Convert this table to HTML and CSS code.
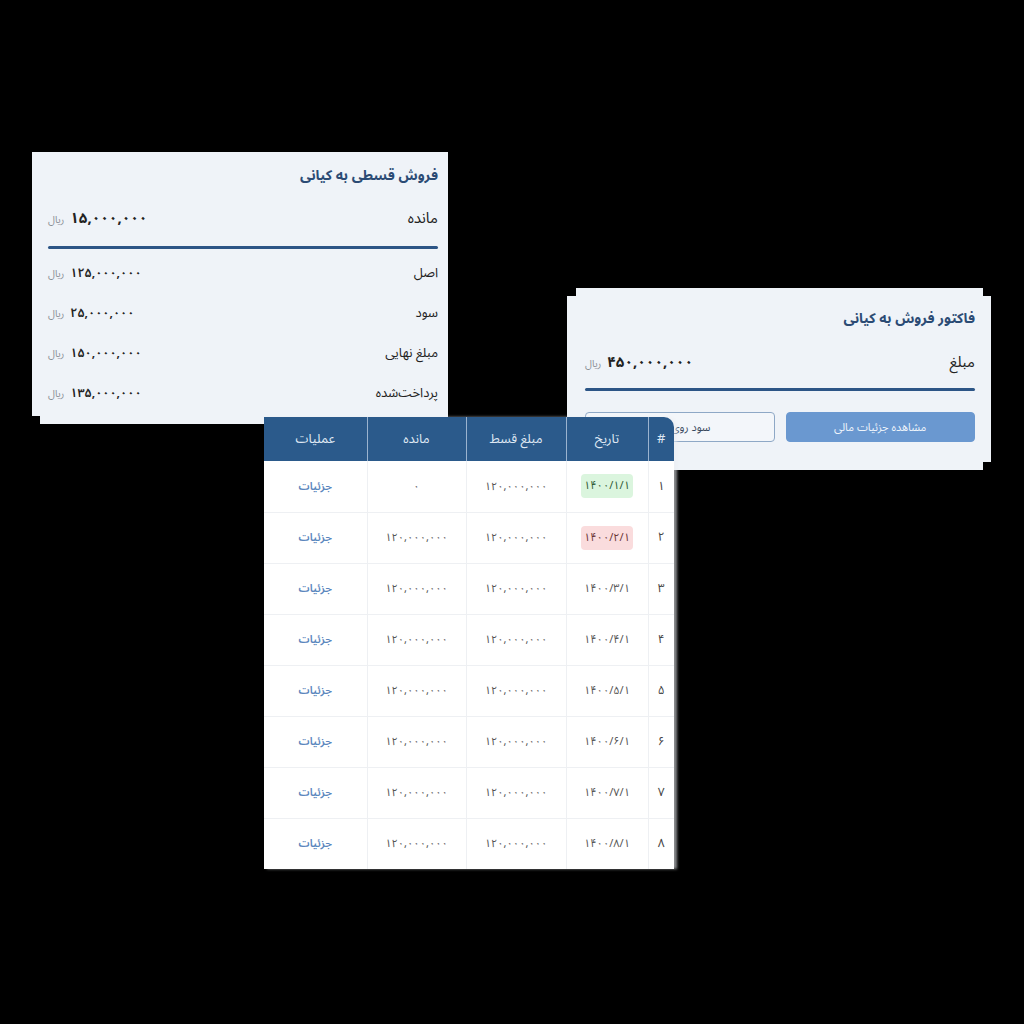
FILE: index.html
```html
<!DOCTYPE html>
<html lang="fa">
<head>
<meta charset="utf-8">
<title>فروش قسطی</title>
<link rel="stylesheet" href="styles.css">
</head>
<body>
<div class="canvas">
  <section class="card card-installment" dir="rtl">
    <h2 class="card-title">فروش قسطی به کیانی</h2>
    <div class="main-row">
      <span class="main-label">مانده</span>
      <span class="amount big"><b>۱۵,۰۰۰,۰۰۰</b><small>ریال</small></span>
    </div>
    <div class="divider"></div>
    <div class="row"><span class="label">اصل</span><span class="amount"><b>۱۲۵,۰۰۰,۰۰۰</b><small>ریال</small></span></div>
    <div class="row"><span class="label">سود</span><span class="amount"><b>۲۵,۰۰۰,۰۰۰</b><small>ریال</small></span></div>
    <div class="row"><span class="label">مبلغ نهایی</span><span class="amount"><b>۱۵۰,۰۰۰,۰۰۰</b><small>ریال</small></span></div>
    <div class="row"><span class="label">پرداخت‌شده</span><span class="amount"><b>۱۳۵,۰۰۰,۰۰۰</b><small>ریال</small></span></div>
  </section>

  <section class="card card-invoice" dir="rtl">
    <h2 class="card-title">فاکتور فروش به کیانی</h2>
    <div class="main-row">
      <span class="main-label">مبلغ</span>
      <span class="amount big"><b>۴۵۰,۰۰۰,۰۰۰</b><small>ریال</small></span>
    </div>
    <div class="divider"></div>
    <div class="buttons">
      <button class="btn btn-fill">مشاهده جزئیات مالی</button>
      <button class="btn btn-outline">سود روی</button>
    </div>
  </section>

  <section class="table-card" dir="rtl">
    <table class="grid">
      <thead>
        <tr><th class="c-num">#</th><th class="c-date">تاریخ</th><th class="c-amt">مبلغ قسط</th><th class="c-rem">مانده</th><th class="c-act">عملیات</th></tr>
      </thead>
      <tbody>
        <tr><td>۱</td><td><span class="badge ok">۱۴۰۰/۱/۱</span></td><td>۱۲۰,۰۰۰,۰۰۰</td><td>۰</td><td><a class="link">جزئیات</a></td></tr>
        <tr><td>۲</td><td><span class="badge late">۱۴۰۰/۲/۱</span></td><td>۱۲۰,۰۰۰,۰۰۰</td><td>۱۲۰,۰۰۰,۰۰۰</td><td><a class="link">جزئیات</a></td></tr>
        <tr><td>۳</td><td>۱۴۰۰/۳/۱</td><td>۱۲۰,۰۰۰,۰۰۰</td><td>۱۲۰,۰۰۰,۰۰۰</td><td><a class="link">جزئیات</a></td></tr>
        <tr><td>۴</td><td>۱۴۰۰/۴/۱</td><td>۱۲۰,۰۰۰,۰۰۰</td><td>۱۲۰,۰۰۰,۰۰۰</td><td><a class="link">جزئیات</a></td></tr>
        <tr><td>۵</td><td>۱۴۰۰/۵/۱</td><td>۱۲۰,۰۰۰,۰۰۰</td><td>۱۲۰,۰۰۰,۰۰۰</td><td><a class="link">جزئیات</a></td></tr>
        <tr><td>۶</td><td>۱۴۰۰/۶/۱</td><td>۱۲۰,۰۰۰,۰۰۰</td><td>۱۲۰,۰۰۰,۰۰۰</td><td><a class="link">جزئیات</a></td></tr>
        <tr><td>۷</td><td>۱۴۰۰/۷/۱</td><td>۱۲۰,۰۰۰,۰۰۰</td><td>۱۲۰,۰۰۰,۰۰۰</td><td><a class="link">جزئیات</a></td></tr>
        <tr><td>۸</td><td>۱۴۰۰/۸/۱</td><td>۱۲۰,۰۰۰,۰۰۰</td><td>۱۲۰,۰۰۰,۰۰۰</td><td><a class="link">جزئیات</a></td></tr>
      </tbody>
    </table>
  </section>
</div>
</body>
</html>
```

FILE: styles.css
```css
* { box-sizing: border-box; }
html, body {
  margin: 0;
  padding: 0;
  background: #000;
}
body {
  font-family: "Noto Sans Arabic", "Vazirmatn", "DejaVu Sans", sans-serif;
  color: #222;
}
.canvas {
  position: relative;
  isolation: isolate;
  width: 1024px;
  height: 1024px;
  background: #000;
}

/* cards */
.card {
  position: absolute;
  background: #eff3f8;
  display: flex;
  flex-direction: column;
}
.card-title {
  margin: 0;
  font-size: 14px;
  line-height: 24px;
  font-weight: 700;
  color: #2b4b74;
}
.main-row {
  display: flex;
  justify-content: space-between;
  align-items: center;
  height: 28px;
}
.main-label {
  font-size: 15px;
  color: #222;
}
.amount {
  display: flex;
  align-items: baseline;
  gap: 6px;
  direction: rtl;
}
.amount b {
  font-weight: 600;
  font-size: 12.5px;
  color: #222;
}
.amount small {
  font-size: 10px;
  color: #8a8f96;
}
.amount.big b {
  font-size: 15px;
  font-weight: 700;
}
.divider {
  height: 3px;
  background: #2c5586;
  border-radius: 2px;
}

.card-installment {
  left: 32px;
  top: 152px;
  width: 416px;
  height: 264px;
  padding: 12px 10px 3px 16px;
}
.card-installment::after {
  content: "";
  position: absolute;
  left: 8px;
  right: 0;
  bottom: -8px;
  height: 8px;
  background: #eff3f8;
}
.card-installment .main-row { margin-top: 16px; }
.card-installment .divider { margin-top: 14px; }
.card-installment .row {
  height: 40px;
  display: flex;
  justify-content: space-between;
  align-items: center;
}
.card-installment .divider + .row { margin-top: 4px; }
.row .label {
  font-size: 13px;
  color: #222;
}

.card-invoice {
  left: 567px;
  top: 296px;
  width: 424px;
  height: 166px;
  padding: 11px 16px 20px 18px;
}
.card-invoice::before {
  content: "";
  position: absolute;
  left: 9px;
  right: 8px;
  top: -8px;
  bottom: -8px;
  background: #eff3f8;
  z-index: -1;
}
.card-invoice .main-row { margin-top: 17px; }
.card-invoice .divider { margin-top: 12px; }
.buttons {
  display: flex;
  gap: 11px;
  margin-top: 21px;
}
.btn {
  flex: 0 0 calc(50% - 5.5px);
  min-width: 0;
  height: 30px;
  border-radius: 4px;
  font-family: inherit;
  font-size: 11px;
  cursor: pointer;
}
.btn-fill {
  background: #6a98d0;
  border: 1px solid #6a98d0;
  color: #eef4fb;
}
.btn-outline {
  background: #f3f6fa;
  border: 1px solid #8ea8c6;
  color: #3a4a5e;
  text-align: right;
  padding-right: 63px;
}

/* table */
.table-card {
  position: absolute;
  left: 264px;
  top: 417px;
  width: 410px;
  z-index: 2;
  background: #fff;
  border-radius: 0 10px 0 0;
  box-shadow: 3px 0 3px rgba(235, 238, 242, 0.6);
}
.grid {
  width: 100%;
  border-collapse: collapse;
  table-layout: fixed;
}
.grid th {
  height: 44px;
  background: #2b5a8b;
  color: #dfe8f3;
  font-weight: 400;
  font-size: 13px;
  border-left: 1px solid #9bb3cf;
}
.grid th:last-child { border-left: none; }
.grid th.c-num { width: 26px; border-radius: 0 10px 0 0; }
.grid th.c-date { width: 82px; }
.grid th.c-amt { width: 100px; }
.grid th.c-rem { width: 99px; }
.grid th.c-act { width: 103px; }
.grid td {
  height: 51px;
  text-align: center;
  font-size: 11px;
  color: #555;
  border-left: 1px solid #eef0f3;
  border-bottom: 1px solid #eef0f3;
}
.grid td:last-child { border-left: none; }
.grid tr:last-child td { border-bottom: none; }
.grid td:first-child { font-size: 12px; color: #444; }
.badge {
  display: inline-block;
  width: 52px;
  height: 24px;
  line-height: 24px;
  border-radius: 4px;
}
.badge.ok { background: #dbf5de; color: #2f5a35; }
.badge.late { background: #fadcdd; color: #6a3536; }
.link {
  color: #5a86bd;
  font-weight: 600;
  font-size: 11px;
}
```
